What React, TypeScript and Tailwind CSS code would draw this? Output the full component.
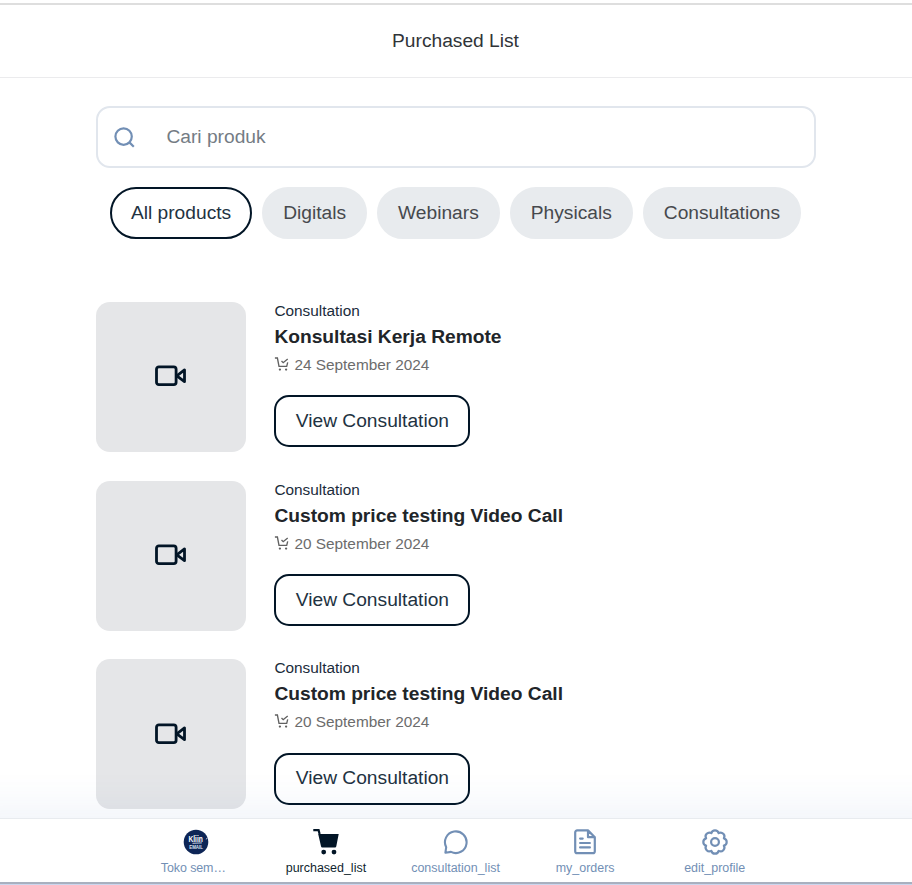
import React from "react";

const tabs = ["Digitals", "Webinars", "Physicals", "Consultations"];

const purchases = [
  { title: "Konsultasi Kerja Remote", date: "24 September 2024" },
  { title: "Custom price testing Video Call", date: "20 September 2024" },
  { title: "Custom price testing Video Call", date: "20 September 2024" },
];

function SearchIcon() {
  return (
    <svg width="24" height="24" viewBox="0 0 24 24" fill="none" stroke="#728fb5" strokeWidth="2.2">
      <circle cx="11.6" cy="11.6" r="8.2" />
      <path d="m17.4 17.4 4.4 4.4" />
    </svg>
  );
}

function VideoIcon() {
  return (
    <svg width="32" height="22" viewBox="0 0 32 22" fill="none" stroke="#021526" strokeWidth="2.8" strokeLinejoin="round">
      <rect x="1.5" y="1.9" width="19.6" height="17.8" rx="2.4" />
      <path d="m21.8 10.8 7.7-5.9v11.8z" />
    </svg>
  );
}

function CartCheckIcon() {
  return (
    <svg width="15" height="15" viewBox="0 0 15 15" fill="none" stroke="#616161" strokeWidth="1.35">
      <path d="M.9 1h2.5l1.6 8.4h7.7l1-4" />
      <path d="m7.5 4.1 1.7 1.6 4.5-3.8" />
      <circle cx="5.9" cy="12.6" r="1.15" fill="#616161" stroke="none" />
      <circle cx="12.1" cy="12.6" r="1.15" fill="#616161" stroke="none" />
    </svg>
  );
}

function StoreLogo() {
  return (
    <svg width="26" height="26" viewBox="0 0 26 26">
      <circle cx="13" cy="13" r="12.3" fill="#0d2556" />
      <text x="5.4" y="12.8" fontSize="8.4" fontWeight="700" fill="#fff" textLength="14.4" lengthAdjust="spacingAndGlyphs">Kliin</text>
      <path d="M9.5 14.3 18.8 13.9M24.2 8.8l-.9 1.6" stroke="#dbe3f2" strokeWidth=".9" />
      <text x="6.2" y="19.9" fontSize="5.6" fontWeight="700" fill="#dbe3f2" textLength="13.8" lengthAdjust="spacingAndGlyphs">EMAIL</text>
    </svg>
  );
}

function CartIcon() {
  return (
    <svg width="26" height="26" viewBox="0 0 26 26">
      <path d="M.3 1.2h5.3l1 3.8" fill="none" stroke="#021526" strokeWidth="2.2" />
      <path d="M5.2 5h20.5l-2.4 12.2a1.5 1.5 0 0 1-1.4 1.4H9.4a1.5 1.5 0 0 1-1.4-1.4z" fill="#021526" />
      <circle cx="10.7" cy="23.1" r="2.4" fill="#021526" />
      <circle cx="21" cy="23.1" r="2.4" fill="#021526" />
    </svg>
  );
}

function ChatIcon() {
  return (
    <svg width="26" height="26" viewBox="0 0 26 26" fill="none" stroke="currentColor" strokeWidth="2.1" strokeLinejoin="round">
      <path d="M2.4 23.7 3.2 18.2A10.8 10.8 0 1 1 8 22.9z" />
    </svg>
  );
}

function OrdersIcon() {
  return (
    <svg width="26" height="26" viewBox="0 0 26 26" fill="none" stroke="currentColor" strokeWidth="2.2" strokeLinejoin="round" strokeLinecap="round">
      <path d="M16 1.4H5.2a2 2 0 0 0-2 2v18.8a2 2 0 0 0 2 2h15.6a2 2 0 0 0 2-2V8.2zM16 1.4v6.8h6.8M8.1 9.6h2.6M8.1 14h9.8M8.1 18.4h9.8" />
    </svg>
  );
}

function GearIcon() {
  return (
    <svg width="26" height="26" viewBox="0 0 26 26" fill="none" stroke="currentColor" strokeWidth="2.2" strokeLinejoin="round">
      <circle cx="13" cy="13" r="3.9" />
      <path d="M9.33 4.13A3.8 3.8 0 0 1 16.67 4.13A3.8 3.8 0 0 1 21.87 9.33A3.8 3.8 0 0 1 21.87 16.67A3.8 3.8 0 0 1 16.67 21.87A3.8 3.8 0 0 1 9.33 21.87A3.8 3.8 0 0 1 4.13 16.67A3.8 3.8 0 0 1 4.13 9.33A3.8 3.8 0 0 1 9.33 4.13z" />
    </svg>
  );
}

const navItems = [
  { label: "Toko sem…", icon: <StoreLogo />, labelClass: "mr-[6px] tracking-[-0.1px]" },
  { label: "purchased_list", icon: <CartIcon />, labelClass: "text-[#101f2f]" },
  { label: "consultation_list", icon: <ChatIcon />, labelClass: "" },
  { label: "my_orders", icon: <OrdersIcon />, labelClass: "" },
  { label: "edit_profile", icon: <GearIcon />, labelClass: "" },
];

export default function App() {
  return (
    <div className="flex h-[885px] w-[912px] flex-col overflow-hidden bg-white font-['Liberation_Sans',Arial,sans-serif] text-[19.2px] text-[#212529]">
      <div className="h-[5px] shrink-0 border-b-2 border-[#dedede]" />
      <header className="flex h-[73px] shrink-0 items-center justify-center border-b border-[#ebebed] pr-px pb-px leading-[29px] text-[#303438]">
        Purchased List
      </header>

      <main className="mx-auto h-[740px] w-[720px] shrink-0 pt-7">
        <div className="flex h-[62px] items-center rounded-[14px] border-2 border-[#e1e6ed] pl-[14px]">
          <SearchIcon />
          <span className="ml-[30.4px] text-[#747c84]">Cari produk</span>
        </div>

        <div className="mt-[19px] flex justify-center gap-[10px] pr-px">
          <button className="h-[52px] rounded-full border-2 border-[#021526] px-[19px] text-[#223241]">All products</button>
          {tabs.map((tab) => (
            <button key={tab} className="h-[52px] rounded-full border-2 border-[#e8ebee] bg-[#e8ebee] px-[19px] text-[#46494d]">
              {tab}
            </button>
          ))}
        </div>

        <div className="mt-[62.8px] flex flex-col gap-[28.8px]">
          {purchases.map((item, i) => (
            <article key={i} className="flex h-[150px] gap-[28.4px]">
              <div className="flex size-[150px] items-center justify-center rounded-[14px] bg-[#e5e6e8] pr-px pb-px">
                <VideoIcon />
              </div>
              <div className="flex flex-col items-start">
                <p className="h-[20px] text-[15.36px] leading-[18px] text-[#1b2c3b]">Consultation</p>
                <h2 className="h-[30px] text-[19.2px] leading-[29px] font-bold">{item.title}</h2>
                <p className="flex h-[43.6px] items-start gap-[5px] text-[15.36px] leading-[26px] text-[#6c6c6c]">
                  <span className="mt-[5px]"><CartCheckIcon /></span>
                  {item.date}
                </p>
                <button className="h-[52px] w-[196px] rounded-[15px] border-2 border-[#021526] pb-[0.4px] text-[#223241]">
                  View Consultation
                </button>
              </div>
            </article>
          ))}
        </div>
      </main>

      <nav className="relative z-10 flex h-[64px] shrink-0 justify-center border-t border-[#e8ebef] bg-white pr-px shadow-[0_30px_38px_40px_rgba(63,105,180,0.08)]">
        {navItems.map((item) => (
          <div key={item.label} className="flex w-[129.6px] flex-col items-center pt-[10px] text-[12.48px] leading-[18px] text-[#728fb5]">
            {item.icon}
            <span className={"mt-[4px] " + item.labelClass}>{item.label}</span>
          </div>
        ))}
      </nav>
      <div className="relative z-10 h-[3px] shrink-0 border-t-2 border-[#a9b0bf] bg-[#ccd6ee]" />
    </div>
  );
}
